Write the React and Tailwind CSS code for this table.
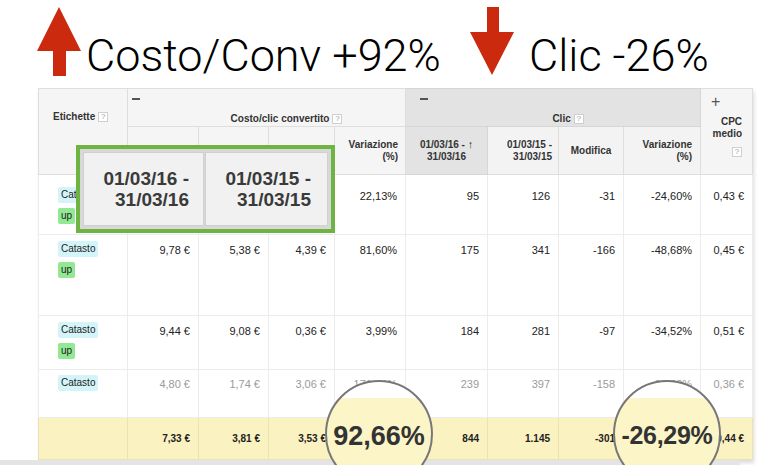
const cols = [89, 71, 70, 66, 71, 82, 71, 65, 77, 52];

const rows = [
  { h: 60, pt: 15, tags: ["Catasto", "up"], cells: ["", "", "", "22,13%", "95", "126", "-31", "-24,60%", "0,43 €"] },
  { h: 81, pt: 9, tags: ["Catasto", "up"], cells: ["9,78 €", "5,38 €", "4,39 €", "81,60%", "175", "341", "-166", "-48,68%", "0,45 €"] },
  { h: 54, pt: 9, tags: ["Catasto", "up"], cells: ["9,44 €", "9,08 €", "0,36 €", "3,99%", "184", "281", "-97", "-34,52%", "0,51 €"] },
  { h: 48, pt: 8, tags: ["Catasto"], faded: true, cells: ["4,80 €", "1,74 €", "3,06 €", "176,44%", "239", "397", "-158", "-39,80%", "0,36 €"] },
];

// the two values under the magnifiers are drawn by the circles instead
const totals = ["7,33 €", "3,81 €", "3,53 €", "", "844", "1.145", "-301", "", "0,44 €"];

function Help() {
  return (
    <span className="ml-[3px] inline-flex h-[10px] w-[10px] items-center justify-center border border-[#cfcfcf] bg-white align-middle text-[8px] font-normal leading-none text-[#a0a0a0]">
      ?
    </span>
  );
}

function Minus() {
  return <div className="h-[2px] w-[8px] bg-[#555]" />;
}

function Tag({ label }) {
  const green = label === "up";
  return (
    <span
      className={`inline-block rounded-[2px] px-[3px] text-[10px] leading-[16px] text-[#222] ${
        green ? "bg-[#93e893]" : "bg-[#d3f5f9]"
      }`}
    >
      {label}
    </span>
  );
}

function UpArrow() {
  return (
    <svg width="44" height="70" viewBox="0 0 44 70" className="shrink-0">
      <polygon points="22,0 44,44 29,44 29,69 16,69 16,44 0,44" fill="#cc2a0e" />
    </svg>
  );
}

function DownArrow() {
  return (
    <svg width="45" height="69" viewBox="0 0 45 69" className="shrink-0">
      <polygon points="17,0 29,0 29,25 44,25 22,68 0,25 17,25" fill="#cc2a0e" />
    </svg>
  );
}

export default function App() {
  return (
    <div className="relative h-[465px] w-[775px] overflow-hidden bg-white font-['Liberation_Sans',Arial,sans-serif]">
      {/* headline */}
      <div className="flex h-[88px] items-start pl-[37px] pt-[7px] font-['Roboto','Helvetica_Neue',sans-serif] font-light text-[45px] leading-none text-black">
        <UpArrow />
        <span className="ml-[5px] mt-[26px] w-[384px] whitespace-nowrap">Costo/Conv +92%</span>
        <DownArrow />
        <span className="ml-[14px] mt-[26px] whitespace-nowrap">Clic -26%</span>
      </div>

      {/* table */}
      <div className="ml-[38px] w-[714px] shadow-[2px_3px_4px_rgba(0,0,0,0.15)]">
        <table className="w-[714px] table-fixed border-collapse text-[11px] text-[#222]">
          <colgroup>
            {cols.map((w, i) => (
              <col key={i} style={{ width: w }} />
            ))}
          </colgroup>
          <thead className="text-[10px] font-bold text-[#333]">
            <tr className="h-[36px]">
              <th rowSpan={2} className="border border-[#dedede] bg-[#f5f5f5] pl-[14px] pt-[20px] text-left align-top font-bold">
                Etichette<Help />
              </th>
              <th colSpan={4} className="border border-[#dedede] bg-[#f5f5f5] px-[4px] align-top font-bold">
                <div className="pt-[9px]"><Minus /></div>
                <div className="mt-[11px] pl-[40px] text-center">Costo/clic convertito<Help /></div>
              </th>
              <th colSpan={4} className="border border-[#d6d6d6] bg-[#e3e3e3] px-[14px] align-top font-bold">
                <div className="pt-[9px]"><Minus /></div>
                <div className="mt-[11px] pl-[30px] text-center">Clic<Help /></div>
              </th>
              <th rowSpan={2} className="border border-[#dedede] bg-[#f5f5f5] pr-[10px] align-top font-bold">
                <div className="pl-[10px] pt-[5px] text-left text-[16px] font-normal leading-none text-[#555]">+</div>
                <div className="mt-[6px] text-right leading-[12px]">
                  CPC
                  <br />
                  medio
                </div>
                <div className="mt-[4px] text-right"><Help /></div>
              </th>
            </tr>
            <tr className="h-[48px] leading-[12px]">
              <th className="border border-[#dedede] bg-[#f5f5f5]" />
              <th className="border border-[#dedede] bg-[#f5f5f5]" />
              <th className="border border-[#dedede] bg-[#f5f5f5]" />
              <th className="border border-[#dedede] bg-[#f5f5f5] pr-[7px] text-right font-bold">
                Variazione
                <br />
                (%)
              </th>
              <th className="border border-[#d6d6d6] bg-[#e3e3e3] text-center font-bold">
                01/03/16 - <span className="text-[11px]">↑</span>
                <br />
                31/03/16
              </th>
              <th className="border border-[#dedede] bg-[#f3f3f3] pr-[6px] text-right font-bold">
                01/03/15 -
                <br />
                31/03/15
              </th>
              <th className="border border-[#dedede] bg-[#f3f3f3] text-center font-bold">Modifica</th>
              <th className="border border-[#dedede] bg-[#f3f3f3] pr-[8px] text-right font-bold">
                Variazione
                <br />
                (%)
              </th>
            </tr>
          </thead>
          <tbody>
            {rows.map((r, i) => (
              <tr key={i} style={{ height: r.h }} className={r.faded ? "text-[#9a9a9a]" : ""}>
                <td className="border border-[#ececec] pl-[19px] align-top" style={{ paddingTop: r.pt - 3 }}>
                  <div className="flex flex-col items-start gap-[5px]">
                    {r.tags.map((t) => (
                      <Tag key={t} label={t} />
                    ))}
                  </div>
                </td>
                {r.cells.map((c, j) => (
                  <td
                    key={j}
                    className="border border-[#ececec] pr-[8px] text-right align-top leading-[13px]"
                    style={{ paddingTop: r.pt }}
                  >
                    {c}
                  </td>
                ))}
              </tr>
            ))}
            <tr className="h-[42px] bg-[#fbf2c1] text-[10px] font-bold text-[#222]">
              <td className="border border-[#ebe2b4]" />
              {totals.map((c, j) => (
                <td key={j} className="border border-[#ebe2b4] pr-[8px] text-right">
                  {c}
                </td>
              ))}
            </tr>
          </tbody>
        </table>
      </div>
      <div className="h-[8px] w-[740px] bg-[#e4e4e4]" />

      {/* green callout over the date headers */}
      <div className="absolute left-[76px] top-[145px] flex h-[88px] w-[259px] gap-[1px] border-[4px] border-[#6db443] bg-[#d8d8d8] p-[3px] text-[19px] font-bold leading-[21px] text-[#3a3a3a]">
        <div className="flex w-[121px] flex-col items-end justify-center border border-[#d0d0d0] bg-[#f1f1f1] pr-[14px]">
          <span>01/03/16 -</span>
          <span>31/03/16</span>
        </div>
        <div className="flex flex-1 flex-col items-end justify-center border border-[#d0d0d0] bg-[#f1f1f1] pr-[16px]">
          <span>01/03/15 -</span>
          <span>31/03/15</span>
        </div>
      </div>

      {/* magnifier circles */}
      <div className="absolute left-[325px] top-[380px] flex h-[108px] w-[108px] items-start justify-center rounded-full border-2 border-[#777] bg-[linear-gradient(to_bottom,#ffffff_0px,#ffffff_16px,#fcf5c8_16px)] pt-[41px] text-[27px] font-bold leading-none text-[#333]">
        92,66%
      </div>
      <div className="absolute left-[613px] top-[380px] flex h-[108px] w-[108px] items-start justify-center rounded-full border-2 border-[#777] bg-[linear-gradient(to_bottom,#ffffff_0px,#ffffff_16px,#fcf5c8_16px)] pt-[41px] text-[25px] font-bold leading-none tracking-[-0.3px] text-[#333]">
        -26,29%
      </div>
    </div>
  );
}
